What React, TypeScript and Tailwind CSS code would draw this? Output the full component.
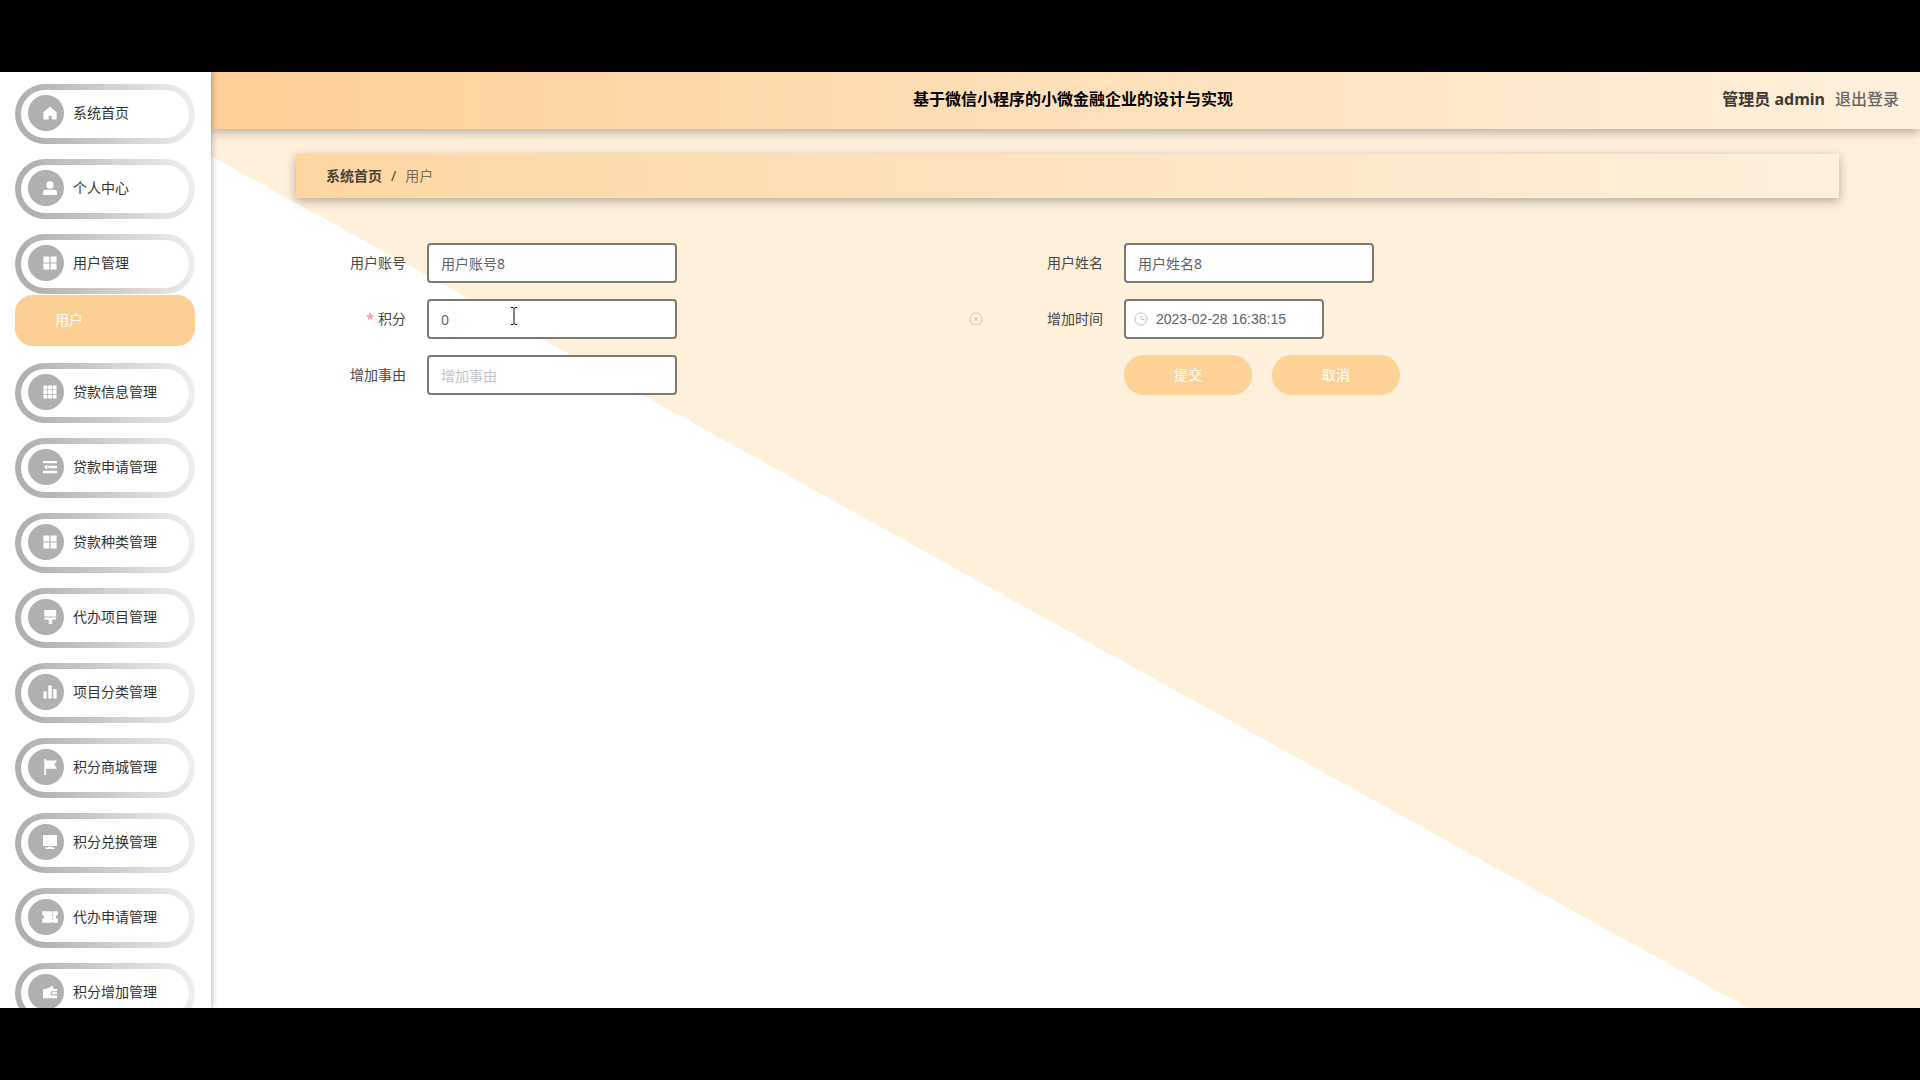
import { useState } from 'react'
import type { ReactNode } from 'react'

type MenuItem = {
  label: string
  icon: ReactNode
  children?: string[]
}

const gridIcon = <path d="M.5.5h6.800v6.800H.5zM8.700.5h6.800v6.800H8.700zM.5 8.700h6.800v6.800H.5zM8.700 8.700h6.800v6.800H8.700z" />

const menu: MenuItem[] = [
  { label: '系统首页', icon: <path d="M8 .5 15.500 7v8.500h-5.500V11H6.500v4.500H.5V7z" /> },
  {
    label: '个人中心',
    icon: (
      <>
        <circle cx="8" cy="4.500" r="4.200" />
        <path d="M0 16v-2.500q0-3.500 3.500-3.500h9q3.500 0 3.500 3.500V16z" />
      </>
    ),
  },
  { label: '用户管理', icon: gridIcon, children: ['用户'] },
  {
    label: '贷款信息管理',
    icon: (
      <path d="M.5.5H5V5H.5zM5.800.5h4.400V5H5.800zM11 .5h4.500V5H11zM.5 5.800H5v4.400H.5zM5.800 5.800h4.400v4.400H5.800zM11 5.800h4.500v4.400H11zM.5 11H5v4.500H.5zM5.800 11h4.400v4.500H5.800zM11 11h4.500v4.500H11z" />
    ),
  },
  {
    label: '贷款申请管理',
    icon: <path d="M0 1h16v2.700H0zM6 6.700h10v2.600H6zM0 12.300h16V15H0zM5 5.200v5.600L1 8z" />,
  },
  { label: '贷款种类管理', icon: gridIcon },
  { label: '代办项目管理', icon: <path d="M1.500 0h13.500v7.500H1.500zM1.500 8.500h13.500v2.300h-4.500V16H6.500v-5.200h-5z" /> },
  { label: '项目分类管理', icon: <path d="M.5 7.500h3.800v8H.5zM6 .5h4v15H6zM11.700 4.500h3.800v11h-3.800z" /> },
  { label: '积分商城管理', icon: <path d="M1.500-1h2v1.500H16l-3 4.700 3 4.800H3.500v7h-2z" /> },
  { label: '积分兑换管理', icon: <path d="M0 0h16v12.500H0zM6 13.300h4v1h3V16H3v-1.700h3z" /> },
  {
    label: '代办申请管理',
    icon: <path d="M-1 1.500h11.500v1.500h1V1.500H17v4.200a2.300 2.300 0 0 0 0 4.600v4.200h-5.500V13h-1v1.500H-1v-4.200a2.300 2.300 0 0 0 0-4.600zM10.500 5v2h1V5zm0 4v2h1V9z" />,
  },
  {
    label: '积分增加管理',
    icon: <path d="M0 4.500h3.300L8 2.500l2.500-2 2 4H16V7h-5a2.500 2.500 0 0 0 0 5h5v3H0zM11 8.400h5v2.200h-5a1.100 1.100 0 0 1 0-2.200z" />,
  },
]

const inputClass = 'h-10 rounded border-2 border-[#7d7870] bg-white text-sm text-[#606266] outline-none placeholder:text-[#c0c4cc]'

function Sidebar() {
  return (
    <nav className="relative z-20 w-[211px] shrink-0 overflow-hidden bg-white pt-3 shadow-[1px_0_6px_rgba(0,0,0,0.3)]">
      <ul className="flex flex-col gap-[15px] pl-[15px] pr-4">
        {menu.map((item) => (
          <li key={item.label}>
            <a href="#" className="block h-[60px] rounded-full bg-[linear-gradient(80deg,#b0b0b0_10%,#f0f0f0)] p-1.5">
              <span className="flex h-12 items-center gap-[9px] rounded-full bg-white pb-0.5 pl-[7px]">
                <span className="flex size-9 items-center justify-end rounded-full bg-[#b0b0b0] pr-[7px]">
                  <svg viewBox="0 0 16 16" className="size-3.5 overflow-visible fill-white" aria-hidden="true">
                    {item.icon}
                  </svg>
                </span>
                <span className="text-sm text-[#333333]">{item.label}</span>
              </span>
            </a>
            {item.children ? (
              <ul className="pb-0.5 pt-px">
                {item.children.map((child) => (
                  <li key={child}>
                    <a href="#" className="flex h-[51px] items-center rounded-[18px] bg-[#fccf95] pb-0.5 pl-10 text-sm text-white">
                      {child}
                    </a>
                  </li>
                ))}
              </ul>
            ) : null}
          </li>
        ))}
      </ul>
    </nav>
  )
}

function Header() {
  return (
    <header className="relative z-10 flex h-[57px] items-center bg-linear-to-r from-[#fecf96] to-[#fff0dc] pb-1 pl-9 pr-[21px] shadow-[0_3px_10px_rgba(0,0,0,0.3)]">
      <div className="flex-1" />
      <h1 className="text-base font-bold text-black">基于微信小程序的小微金融企业的设计与实现</h1>
      <div className="flex flex-1 items-center justify-end gap-2.5 text-base">
        <span className="font-bold text-[#3d3a36]">管理员 admin</span>
        <a href="#" className="font-medium text-[#666666]">
          退出登录
        </a>
      </div>
    </header>
  )
}

function Field({ id, label, required, children }: { id: string; label: string; required?: boolean; children: ReactNode }) {
  return (
    <div className="flex items-center gap-[21px]">
      <label htmlFor={id} className="w-20 text-right text-sm text-[#484848]">
        {required ? <span className="mr-1 text-[#f78989]">*</span> : null}
        {label}
      </label>
      <div className="relative flex flex-1 items-center">{children}</div>
    </div>
  )
}

function UserForm() {
  const [account, setAccount] = useState('用户账号8')
  const [name, setName] = useState('用户姓名8')
  const [points, setPoints] = useState('0')
  const [time, setTime] = useState('2023-02-28 16:38:15')
  const [reason, setReason] = useState('')

  return (
    <form onSubmit={(event) => event.preventDefault()} className="mt-[45px] grid grid-cols-2 gap-y-4 pl-[30px] pr-[119px]">
      <Field id="account" label="用户账号">
        <input id="account" value={account} onChange={(e) => setAccount(e.target.value)} className={`${inputClass} w-[250px] px-3`} />
      </Field>
      <Field id="name" label="用户姓名">
        <input id="name" value={name} onChange={(e) => setName(e.target.value)} className={`${inputClass} w-[250px] px-3`} />
      </Field>
      <Field id="points" label="积分" required>
        <input id="points" value={points} onChange={(e) => setPoints(e.target.value)} className={`${inputClass} w-[250px] px-3`} />
        <svg viewBox="0 0 8 18" className="absolute left-[83px] top-2 h-[18px] w-2 fill-none stroke-black" aria-hidden="true">
          <path d="M1 .5h2l1 1 1-1h2M4 1.500v15M1 17.500h2l1-1 1 1h2" />
        </svg>
        <button type="button" aria-label="清空" onClick={() => setPoints('')} className="absolute right-10">
          <svg viewBox="0 0 14 14" className="size-3.5 fill-none stroke-[#c0c4cc]">
            <circle cx="7" cy="7" r="6" />
            <path d="m5 5 4 4M9 5 5 9" />
          </svg>
        </button>
      </Field>
      <Field id="time" label="增加时间">
        <input
          id="time"
          value={time}
          onChange={(e) => setTime(e.target.value)}
          className={`${inputClass} w-[200px] pl-[30px] font-['Liberation_Sans',sans-serif]`}
        />
        <svg viewBox="0 0 14 14" className="absolute left-2.5 size-3.5 fill-none stroke-[#c0c4cc]" aria-hidden="true">
          <circle cx="7" cy="7" r="6" />
          <path d="M7 3.500V7.500h3.500" />
        </svg>
      </Field>
      <Field id="reason" label="增加事由">
        <input
          id="reason"
          value={reason}
          placeholder="增加事由"
          onChange={(e) => setReason(e.target.value)}
          className={`${inputClass} w-[250px] px-3`}
        />
      </Field>
      <div className="flex gap-5 pl-[101px]">
        <button type="submit" className="h-10 w-32 rounded-full bg-[#fed197] text-sm text-white">
          提交
        </button>
        <button type="button" className="h-10 w-32 rounded-full bg-[#fed197] text-sm text-white">
          取消
        </button>
      </div>
    </form>
  )
}

export default function App() {
  return (
    <div className="min-h-screen bg-black py-18 font-['Noto_Sans','Noto_Sans_CJK_SC',sans-serif]">
      <div className="flex h-[calc(100vh-144px)] overflow-hidden bg-white">
        <Sidebar />
        <div className="flex-1 bg-[linear-gradient(29deg,#ffffff_45.25%,#fef0db_45.25%)]">
          <Header />
          <main className="ml-[85px] mr-[81px] pt-[25px]">
            <div
              aria-label="面包屑"
              className="flex h-11 items-center gap-[9px] bg-linear-to-r from-[#fed6a2] to-[#fff0dc] pl-[30px] text-sm shadow-[0_3px_10px_rgba(0,0,0,0.3)]"
            >
              <a href="#" className="font-bold text-[#48423a]">
                系统首页
              </a>
              <span className="text-[#48423a]">/</span>
              <span className="text-[#7a6c58]">用户</span>
            </div>
            <UserForm />
          </main>
        </div>
      </div>
    </div>
  )
}
